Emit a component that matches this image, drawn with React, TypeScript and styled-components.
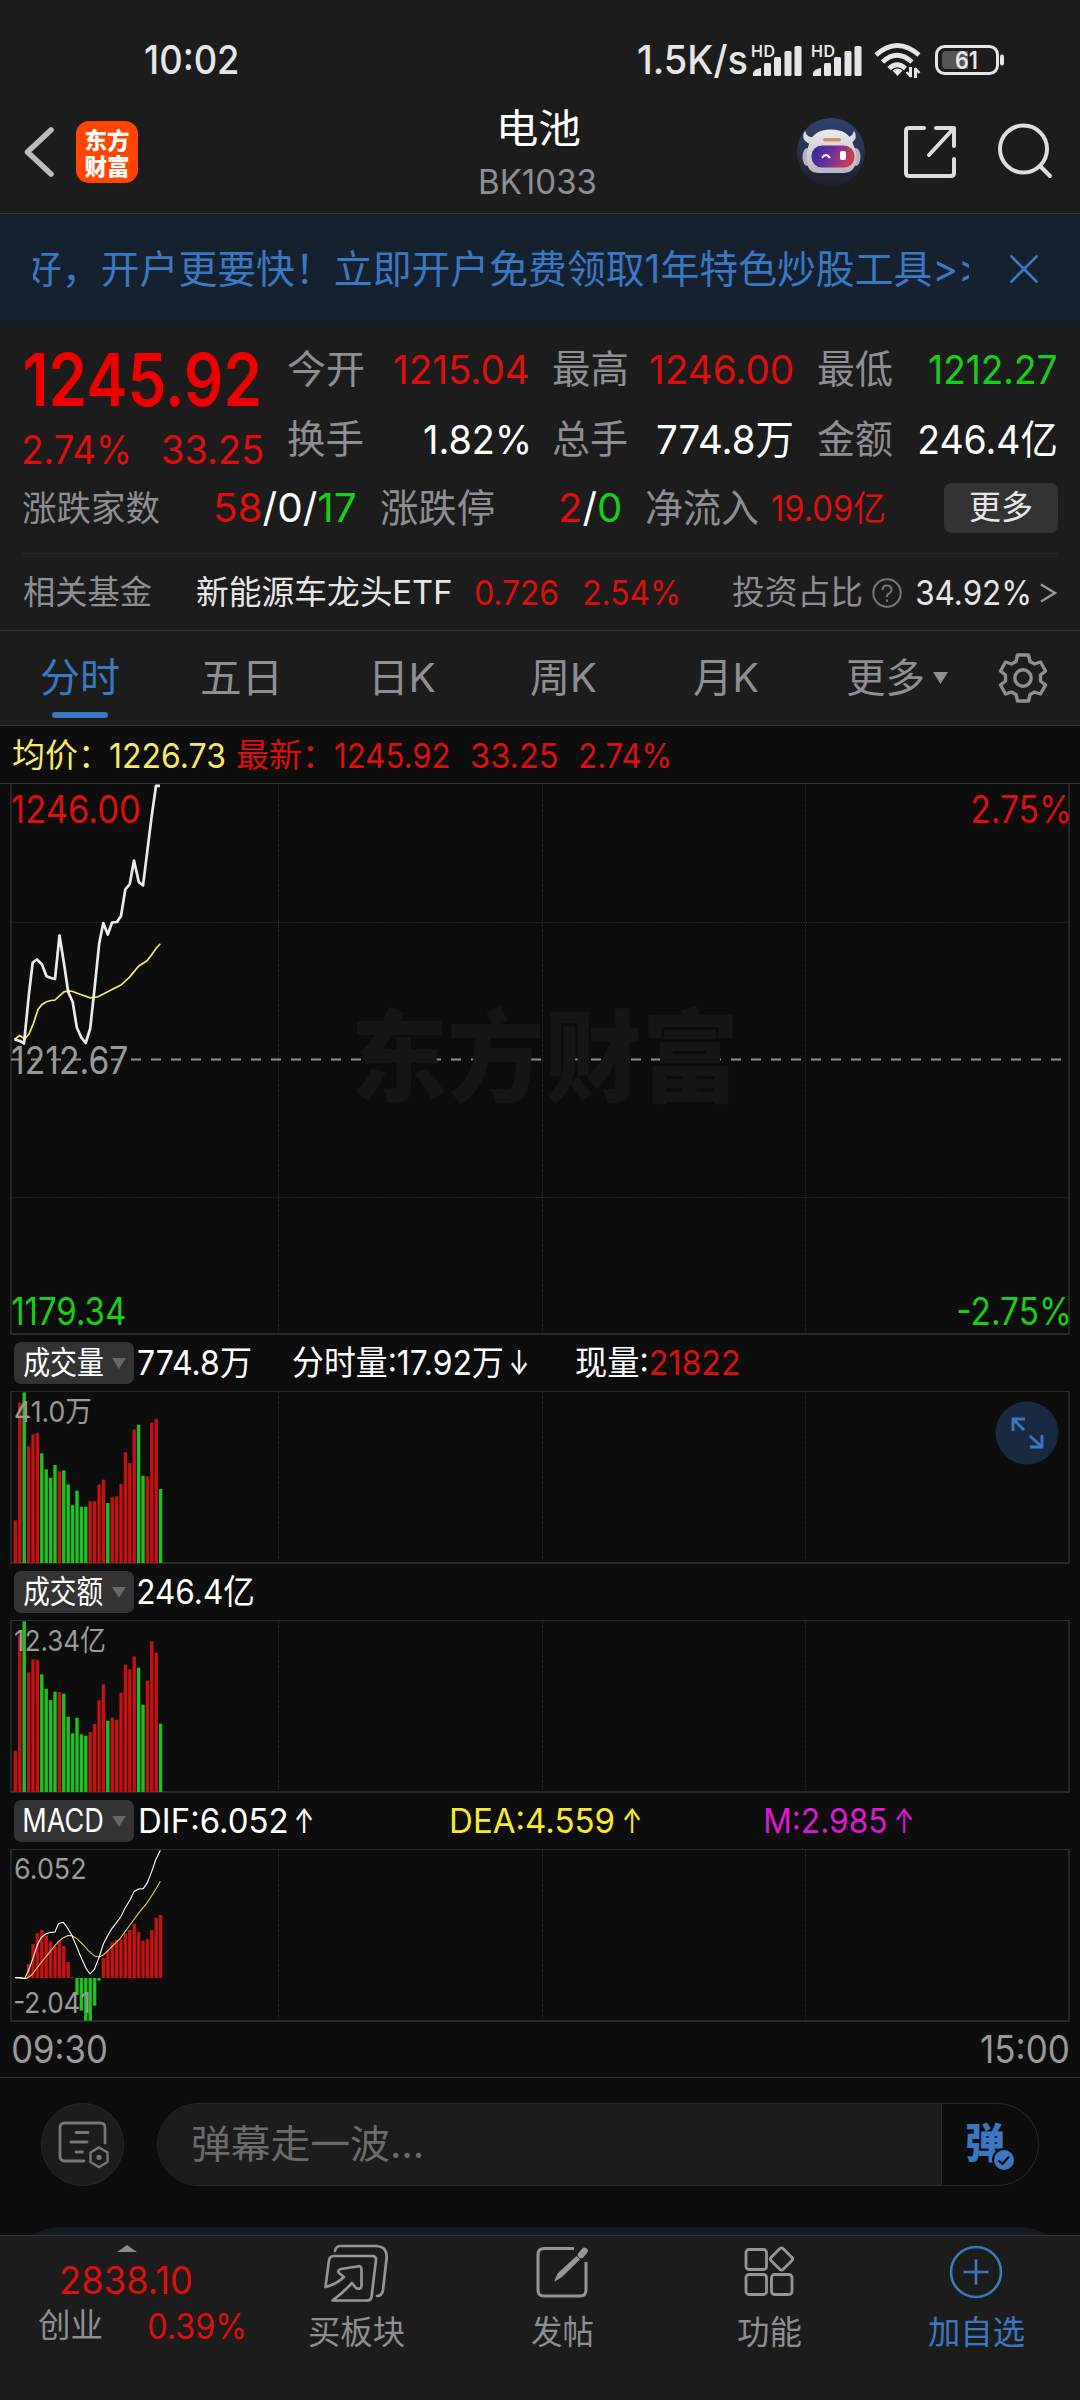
import React, { useLayoutEffect, useRef, useState } from "react";
import styled, { createGlobalStyle } from "styled-components";

const FONT = `Inter, "Noto Sans CJK SC", sans-serif`;

const c = {
  panel: "#1c1c1c",
  chart: "#0d0d0d",
  line: "#333333",
  grid: "#2a2a2a",
  red: "#dc0f0d",
  strongRed: "#ee0000",
  green: "#18cf18",
  blue: "#3a78c2",
  gray: "#8e8e93",
  axis: "#999999",
  light: "#e6e6e6",
  white: "#ffffff",
  yellow: "#f7e967",
};

const GlobalStyle = createGlobalStyle`
  * { box-sizing: border-box; }
  html, body { margin: 0; padding: 0; background: ${c.chart}; }
  body { font-family: ${FONT}; -webkit-font-smoothing: antialiased; }
  svg { display: block; flex: none; overflow: visible; }
`;

/* ---------- text that fills a fixed slot ---------- */

const Slot = styled.span<{ $w: number; $ml: number; $size: number; $color: string; $weight: number }>`
  display: block;
  flex: none;
  width: ${(p) => p.$w}px;
  margin-left: ${(p) => p.$ml}px;
  height: 1.2em;
  line-height: 1.2;
  font-size: ${(p) => p.$size}px;
  font-weight: ${(p) => p.$weight};
  color: ${(p) => p.$color};
`;

const SlotInner = styled.span`
  display: inline-block;
  white-space: pre;
  transform-origin: 0 50%;
  vertical-align: top;
`;

interface FitProps {
  w: number;
  size: number;
  color?: string;
  weight?: number;
  ml?: number;
  children: React.ReactNode;
}

function Fit({ w, size, color = c.white, weight = 400, ml = 0, children }: FitProps) {
  const ref = useRef<HTMLSpanElement>(null);
  const [transform, setTransform] = useState("none");
  useLayoutEffect(() => {
    const el = ref.current;
    const ctx = document.createElement("canvas").getContext("2d");
    if (!el || !ctx) return;
    ctx.font = `${weight} ${size}px ${FONT}`;
    const m = ctx.measureText(el.textContent || "");
    const ink = m.actualBoundingBoxLeft + m.actualBoundingBoxRight;
    if (ink > 0) setTransform(`scaleX(${w / ink}) translateX(${m.actualBoundingBoxLeft}px)`);
  }, [w, size, weight]);
  return (
    <Slot $w={w} $ml={ml} $size={size} $color={color} $weight={weight}>
      <SlotInner ref={ref} style={{ transform }}>
        {children}
      </SlotInner>
    </Slot>
  );
}

const Tint = styled.span<{ $color: string }>`
  color: ${(p) => p.$color};
`;

/* ---------- layout parts ---------- */

const Screen = styled.main`
  width: 1080px;
  height: 2400px;
  display: flex;
  flex-direction: column;
  overflow: hidden;
  background: ${c.chart};
`;

const Row = styled.div<{ $h: number; $pl?: number; $pt?: number }>`
  display: flex;
  align-items: center;
  flex: none;
  height: ${(p) => p.$h}px;
  padding-left: ${(p) => p.$pl || 0}px;
  padding-top: ${(p) => p.$pt || 0}px;
`;

const StatusBar = styled(Row)`
  background: ${c.panel};
`;

const Signal = styled.div<{ $ml: number }>`
  margin-left: ${(p) => p.$ml}px;
`;

const Header = styled.header`
  flex: none;
  display: flex;
  height: 114px;
  padding-left: 24px;
  background: ${c.panel};
  border-bottom: 1px solid ${c.line};
`;

const Back = styled.div`
  padding-top: 26px;
`;

const Logo = styled.div`
  width: 62px;
  height: 62px;
  margin: 21px 0 0 20px;
  border-radius: 13px;
  background: #ff4500;
  color: #fff;
  display: flex;
  flex-direction: column;
  align-items: center;
  justify-content: center;
  font: 900 22.5px/26px "Noto Sans CJK SC", sans-serif;
`;

const Title = styled.div`
  margin-left: 342px;
  width: 115px;
  display: flex;
  flex-direction: column;
  padding-top: 5px;
`;

const SubTitle = styled.div`
  padding-top: 9px;
`;

const Actions = styled.div`
  display: flex;
  align-items: center;
  height: 104px;
  margin-left: 202px;
`;

const IconSlot = styled.div<{ $ml: number }>`
  margin-left: ${(p) => p.$ml}px;
`;

const Banner = styled.section`
  flex: none;
  display: flex;
  align-items: center;
  height: 110px;
  padding: 0 42px 0 33px;
  background: #15212f;
`;

const Marquee = styled.div`
  width: 937px;
  height: 60px;
  overflow: hidden;
  display: flex;
  align-items: center;
  margin-right: 41px;
`;

const Quote = styled.section`
  flex: none;
  height: 307px;
  padding: 10px 22px 0;
  background: ${c.panel};
  border-bottom: 1px solid ${c.line};
`;

const QuoteTop = styled.div`
  display: grid;
  grid-template-columns: 264px 240px 239px 238px;
  height: 140px;
  padding-left: 2px;
`;

const PriceCol = styled.div``;

const StatCol = styled.div<{ $ml?: number }>`
  display: flex;
  flex-direction: column;
  width: 240px;
  margin-left: ${(p) => p.$ml || 0}px;
`;

const Stat = styled.div<{ $w: number }>`
  display: flex;
  align-items: center;
  justify-content: space-between;
  width: ${(p) => p.$w}px;
  height: 70px;
  padding-top: 1px;
`;

const MoreButton = styled.button`
  display: flex;
  align-items: center;
  justify-content: center;
  width: 114px;
  height: 50px;
  margin: 0 0 0 60px;
  padding: 0;
  border: 0;
  border-radius: 8px;
  background: #333333;
  font-family: inherit;
`;

const Divider = styled.hr`
  height: 2px;
  margin: 11px 0 0;
  border: 0;
  background: #242424;
`;

const Tabs = styled.nav`
  flex: none;
  display: flex;
  height: 95px;
  padding-left: 41px;
  background: ${c.panel};
  border-bottom: 1px solid ${c.line};
`;

const Tab = styled.div<{ $ml: number }>`
  display: flex;
  flex-direction: column;
  align-items: center;
  margin-left: ${(p) => p.$ml}px;
  padding-top: 23px;
`;

const TabMark = styled.i`
  width: 56px;
  height: 6px;
  margin-top: 10px;
  border-radius: 3px;
  background: ${c.blue};
`;

const TabMore = styled.div`
  display: flex;
  align-items: center;
  height: 94px;
  margin-left: 89px;
`;

const InfoLine = styled(Row)`
  border-bottom: 1px solid ${c.line};
`;

const Chart = styled.div<{ $h: number }>`
  position: relative;
  flex: none;
  height: ${(p) => p.$h}px;
`;

const Over = styled.div<{ $x: number; $y: number }>`
  position: absolute;
  left: ${(p) => p.$x}px;
  top: ${(p) => p.$y}px;
  height: 0;
  display: flex;
  align-items: center;
`;

const Chip = styled.div`
  flex: none;
  display: flex;
  align-items: center;
  width: 120px;
  height: 42px;
  padding-left: 10px;
  border-radius: 7px;
  background: #333333;
`;

const Danmu = styled.section`
  flex: none;
  display: flex;
  height: 158px;
  padding: 25px 0 0 41px;
  border-top: 1px solid ${c.line};
  position: relative;
`;

const RoundButton = styled.div`
  width: 83px;
  height: 83px;
  border-radius: 50%;
  border: 1px solid #282828;
  background: ${c.panel};
  display: flex;
  align-items: center;
  justify-content: center;
`;

const Pill = styled.div`
  display: flex;
  width: 882px;
  height: 83px;
  margin-left: 33px;
  border: 1px solid #2a2a2a;
  border-radius: 42px;
  overflow: hidden;
`;

const PillInput = styled.div`
  display: flex;
  align-items: center;
  width: 784px;
  padding-left: 35px;
  background: ${c.panel};
  border-right: 1px solid #2a2a2a;
`;

const PillToggle = styled.div`
  position: relative;
  flex: 1;
  display: flex;
  align-items: center;
  padding: 0 0 2px 25px;
`;

const Badge = styled.div`
  position: absolute;
  left: 50px;
  top: 44px;
`;

const CardEdge = styled.div`
  position: absolute;
  left: 26px;
  right: 26px;
  bottom: 0;
  height: 8px;
  background: #121b25;
  clip-path: path("M6 9 Q18 0 34 0 H994 Q1010 0 1022 9 Z");
`;

const Footer = styled.footer`
  flex: 1;
  display: flex;
  border-top: 1px solid ${c.line};
  background: ${c.panel};
`;

const IndexBox = styled.div`
  width: 309px;
  padding-left: 38px;
`;

const Caret = styled.div`
  padding: 9px 0 0 79px;
`;

const NavItem = styled.div<{ $ml: number; $w: number }>`
  margin-left: ${(p) => p.$ml}px;
  width: ${(p) => p.$w}px;
  display: flex;
  flex-direction: column;
  align-items: center;
`;

const NavIcon = styled.div`
  height: 77px;
  padding-top: 4px;
`;

/* ---------- icons ---------- */

const Bars = () => (
  <svg width="52" height="34" viewBox="0 0 52 34" fill={c.light}>
    <text x="0" y="14" fontFamily="Inter" fontSize="16" fontWeight="600" textLength="24">HD</text>
    <path d="M2 33v-3q1-4 8-5v8z" />
    <rect x="13" y="20" width="7" height="13" rx="1.500" />
    <rect x="23" y="14" width="7" height="19" rx="1.500" />
    <rect x="33.500" y="8" width="7" height="25" rx="1.500" />
    <rect x="43.500" y="3" width="7" height="30" rx="1.500" />
  </svg>
);

const Wifi = () => (
  <svg width="48" height="36" viewBox="0 0 48 36" fill="none" stroke={c.light} strokeWidth="4.600">
    <path d="M2 13Q23 -6 45 13" />
    <path d="M8.500 20Q23 6.500 38 20" />
    <path d="M15 26.500Q23 19 31.500 26.500" />
    <path d="M18.500 28.500Q23.500 24.500 28.500 28.500L23.500 34z" fill={c.light} stroke="none" />
    <path d="M36.500 25v10M41.500 36v-10" stroke={c.light} strokeWidth="3" />
    <path d="M37 35l-4.500-5M41 26l4.500 5" strokeWidth="2.500" />
  </svg>
);

const Battery = () => (
  <svg width="70" height="32" viewBox="0 0 70 32">
    <rect x="1.500" y="2.500" width="61" height="27" rx="8" fill="none" stroke={c.light} strokeWidth="3" />
    <path d="M11 7h22v18H11q-4 0-4-4V11q0-4 4-4z" fill="#555" />
    <rect x="65" y="10.500" width="4" height="11" rx="2" fill={c.light} />
    <text x="20" y="24.500" fontFamily="Inter" fontSize="24" fontWeight="600" fill={c.light} textLength="23" lengthAdjust="spacingAndGlyphs">61</text>
  </svg>
);

const Robot = () => (
  <svg width="68" height="68" viewBox="0 0 68 68">
    <defs>
      <linearGradient id="sky" x1="0" y1="0" x2="0" y2="1">
        <stop offset="0" stopColor="#30436d" />
        <stop offset="1" stopColor="#1c1f2b" />
      </linearGradient>
      <linearGradient id="visor" x1="0" y1="0" x2="1" y2="0.200">
        <stop offset="0" stopColor="#2b2a9a" />
        <stop offset="0.500" stopColor="#6d2fa0" />
        <stop offset="1" stopColor="#c8404f" />
      </linearGradient>
      <linearGradient id="shell" x1="0" y1="0" x2="0" y2="1">
        <stop offset="0" stopColor="#eceaee" />
        <stop offset="1" stopColor="#b9b6bf" />
      </linearGradient>
    </defs>
    <circle cx="34" cy="34" r="34" fill="url(#sky)" />
    <path d="M8 12.500q-5 8 3.500 13l5-6q-7 0-8.500-7zM57 12.500q5 8-3.500 13l-5-6q7 0 8.500-7z" fill="#dddbe0" />
    <ellipse cx="10" cy="39" rx="4.500" ry="9" fill="#b7b4be" />
    <ellipse cx="59" cy="39" rx="4.500" ry="9" fill="#b7b4be" />
    <path d="M12 26Q16 11.500 34 11.500T56 26q4 8 3 18-2 11-12 11H22Q11 55 10 44q-1-10 2-18z" fill="url(#shell)" />
    <rect x="26" y="20" width="18" height="3.500" rx="1.700" fill="#c9936a" />
    <rect x="14.500" y="27.500" width="43" height="22" rx="10.500" fill="url(#visor)" />
    <path d="M25 40q4-6 8 0" fill="none" stroke="#fff" strokeWidth="2" />
    <rect x="43" y="33" width="6" height="9" rx="2" fill="#fff" />
  </svg>
);

const Gear = () => (
  <svg width="48" height="50" viewBox="-24 -25 48 50" fill="none" stroke={c.gray} strokeWidth="3.400" strokeLinejoin="round">
    <path d="M-5.500 -23H5.500L7 -16.500L11.500 -14L17.500 -16L22.500 -7L17.500 -3V3L22.500 7L17.500 16L11.500 14L7 16.500L5.500 23H-5.500L-7 16.500L-11.500 14L-17.500 16L-22.500 7L-17.500 3V-3L-22.500 -7L-17.500 -16L-11.500 -14L-7 -16.500Z" />
    <circle r="8.200" />
  </svg>
);

const Down = ({ w, h, color }: { w: number; h: number; color: string }) => (
  <svg width={w} height={h} viewBox="0 0 10 10" preserveAspectRatio="none">
    <path d="M0 0H10L5 10Z" fill={color} />
  </svg>
);

/* ---------- chart data ---------- */

const LEFT = 11;
const RIGHT = 1069;
const GRID_X = [278.5, 542.5, 805.5];
const STEP = 4.4;
const FIRST = 13.7;

const price: [number, number][] = [
  [14.5, 255.5], [20, 257], [24, 259.500], [29, 209.500], [32.700, 178.500], [37, 175.500], [42, 180.500], [46.500, 192.300],
  [51, 194], [55, 195], [59.500, 151.500], [64, 179.500], [68.200, 208], [72.700, 218], [76.800, 243.500], [81.300, 253.500],
  [85.700, 259], [90.200, 244.500], [94.700, 203], [99.200, 159.500], [103.300, 139], [107.800, 150.500], [112, 138.500],
  [117, 138], [121, 132], [125.300, 105.500], [129.800, 100], [134, 76.500], [138.800, 98], [143, 101.500], [147, 69.500],
  [151.500, 33.500], [156, 1.800], [160, 1.800],
];

const average: [number, number][] = [
  [14.500, 255.500], [19.600, 251.500], [24.800, 254.800], [29, 250], [33.400, 239.500], [38, 225.500], [42, 220.500], [46.500, 217.800],
  [51, 216.500], [55, 216], [59.500, 211.800], [64, 207.800], [68.200, 206.800], [72.700, 207.500], [81.300, 210.800], [90.200, 213.800],
  [98, 212.800], [103.300, 210], [112, 205.500], [121, 201], [129.800, 192.800], [138.800, 182], [147, 176.800], [151.500, 171], [156, 164.500], [160.300, 159.800],
];

type Bar = [number, "r" | "g"];
const kinds = "rrgrrrggggrgggggg" + "rrrrgrrrrrrggrrrg";
const toBars = (values: number[]): Bar[] => values.map((v, i) => [v / 3, kinds[i] as "r" | "g"]);

const volume = toBars([
  128, 481, 512, 350, 386, 390, 329, 281, 256, 294, 275, 278, 236, 174, 217, 169, 169, 185, 185, 235, 250, 180, 198, 200, 237, 332,
  300, 400, 415, 262, 260, 421, 433, 222,
]);
const amount = toBars([
  124, 470, 512, 359, 398, 397, 353, 310, 276, 301, 300, 295, 226, 176, 223, 173, 169, 180, 204, 275, 323, 214, 223, 217, 298, 382,
  368, 407, 373, 262, 334, 452, 418, 205,
]);
const macd = [
  0, 0, 0, 42, 102, 135, 144, 127, 110, 94, 113, 96, 48, 3, -51, -98, -128, -128, -83, -8, 60, 82, 107, 114, 116, 134, 144, 162, 139,
  112, 117, 144, 181, 189,
].map((v) => v / 3);

const dif: [number, number][] = [
  [46, 593], [60, 593], [74, 596], [86, 570], [99, 535], [112, 495], [124, 472], [137, 462], [152, 457], [165, 456], [175, 432], [182, 428], [190, 427],
  [200, 440], [215, 465], [230, 500], [243, 532], [258, 565], [270, 582], [283, 568], [296, 535], [310, 492], [323, 467], [336, 445],
  [350, 427], [362, 411], [375, 385], [390, 360], [402, 335], [415, 327], [430, 326], [442, 308], [455, 275], [467, 240], [481, 211],
];
const dea: [number, number][] = [
  [46, 593], [80, 595], [95, 585], [120, 552], [150, 515], [175, 485], [190, 473], [203, 467], [215, 467], [230, 475], [250, 495],
  [265, 512], [285, 529], [298, 531], [310, 525], [330, 506], [360, 476], [390, 435], [415, 400], [440, 370], [460, 340], [481, 304],
];
const scaled = (pts: [number, number][]) => pts.map(([x, y]) => `${x / 3},${(y - 207) / 3}`).join(" ");
const plain = (pts: [number, number][]) => pts.map((p) => p.join(",")).join(" ");

function Frame({ h, top = true }: { h: number; top?: boolean }) {
  return (
    <g fill="none">
      {GRID_X.map((x) => (
        <path key={x} d={`M${x} 1V${h - 2}`} stroke="#333" strokeDasharray="1 1.500" />
      ))}
      {top && <path d={`M${LEFT - 1} 0.500H${RIGHT + 1}`} stroke={c.grid} />}
      <path d={`M${LEFT} 0V${h - 1}H${RIGHT}V0`} stroke={c.grid} strokeWidth="1.800" />
    </g>
  );
}

function BarPane({ bars, children }: { bars: Bar[]; children: React.ReactNode }) {
  return (
    <Chart $h={173}>
      <svg width="1080" height="173">
        <Frame h={173} />
        {bars.map(([v, k], i) => (
          <rect key={i} x={FIRST + i * STEP} y={172 - v} width="3.400" height={v} fill={k === "r" ? "#c41111" : "#1fc01f"} />
        ))}
      </svg>
      {children}
    </Chart>
  );
}

function Selector({ label }: { label: string }) {
  return (
    <Chip>
      <Fit w={79} size={32}>{label}</Fit>
      <IconSlot $ml={9}>
        <Down w={14} h={11} color="#666" />
      </IconSlot>
    </Chip>
  );
}

export default function App() {
  return (
    <>
      <GlobalStyle />
      <Screen>
        <StatusBar $h={100} $pl={145} $pt={20}>
          <Fit w={93} size={40} weight={500} color={c.light}>10:02</Fit>
          <Fit w={109} size={39} weight={500} color={c.light} ml={400}>1.5K/s</Fit>
          <Signal $ml={4}><Bars /></Signal>
          <Signal $ml={8}><Bars /></Signal>
          <Signal $ml={11}><Wifi /></Signal>
          <Signal $ml={13}><Battery /></Signal>
        </StatusBar>

        <Header>
          <Back>
            <svg width="32" height="52" viewBox="0 0 32 52" fill="none" stroke="#bdbdbd" strokeWidth="5.500" strokeLinecap="round" strokeLinejoin="round">
              <path d="M27 4L3.500 26L27 48" />
            </svg>
          </Back>
          <Logo>
            <span>东方</span>
            <span>财富</span>
          </Logo>
          <Title>
            <Fit w={79} size={40} ml={21}>电池</Fit>
            <SubTitle>
              <Fit w={115} size={34} color={c.gray}>BK1033</Fit>
            </SubTitle>
          </Title>
          <Actions>
            <Robot />
            <IconSlot $ml={38}>
              <svg width="54" height="54" viewBox="0 0 54 54" fill="none" stroke="#dedede" strokeWidth="4" strokeLinecap="round" strokeLinejoin="round">
                <path d="M21 3H6Q3 3 3 6V48Q3 51 6 51H48Q51 51 51 48V34M33 3H51V21M51 3L26 30" />
              </svg>
            </IconSlot>
            <IconSlot $ml={40}>
              <svg width="56" height="56" viewBox="0 0 56 56" fill="none" stroke="#dedede" strokeWidth="4" strokeLinecap="round">
                <circle cx="26.500" cy="25" r="23.500" />
                <path d="M43 42L53 52" />
              </svg>
            </IconSlot>
          </Actions>
        </Header>

        <Banner>
          <Marquee>
            <Fit w={957} size={39} color={c.blue} ml={-9}>好，开户更要快！立即开户免费领取1年特色炒股工具&gt;&gt;</Fit>
          </Marquee>
          <svg width="28" height="28" viewBox="0 0 28 28" fill="none" stroke={c.blue} strokeWidth="2.800" strokeLinecap="round">
            <path d="M1.500 1.500L26.500 26.500M26.500 1.500L1.500 26.500" />
          </svg>
        </Banner>

        <Quote>
          <QuoteTop>
            <PriceCol>
              <Row $h={92}>
                <Fit w={234} size={73} weight={600} color={c.strongRed} ml={1}>1245.92</Fit>
              </Row>
              <Row $h={48}>
                <Fit w={104} size={40} color={c.red}>2.74%</Fit>
                <Fit w={99} size={40} color={c.red} ml={35}>33.25</Fit>
              </Row>
            </PriceCol>
            <StatCol>
              <Stat $w={240}>
                <Fit w={75} size={39} color={c.gray}>今开</Fit>
                <Fit w={134} size={40} color={c.red}>1215.04</Fit>
              </Stat>
              <Stat $w={240}>
                <Fit w={75} size={39} color={c.gray}>换手</Fit>
                <Fit w={104} size={40}>1.82%</Fit>
              </Stat>
            </StatCol>
            <StatCol $ml={25}>
              <Stat $w={239}>
                <Fit w={74} size={39} color={c.gray}>最高</Fit>
                <Fit w={142} size={40} color={c.red}>1246.00</Fit>
              </Stat>
              <Stat $w={239}>
                <Fit w={74} size={39} color={c.gray}>总手</Fit>
                <Fit w={135} size={40}>774.8万</Fit>
              </Stat>
            </StatCol>
            <StatCol $ml={51}>
              <Stat $w={238}>
                <Fit w={74} size={39} color={c.gray}>最低</Fit>
                <Fit w={127} size={40} color={c.green}>1212.27</Fit>
              </Stat>
              <Stat $w={238}>
                <Fit w={74} size={39} color={c.gray}>金额</Fit>
                <Fit w={136} size={40}>246.4亿</Fit>
              </Stat>
            </StatCol>
          </QuoteTop>
          <Row $h={68} $pl={1}>
            <Fit w={137} size={35} color={c.gray}>涨跌家数</Fit>
            <Fit w={139} size={40} ml={56}>
              <Tint $color={c.red}>58</Tint>/0/<Tint $color={c.green}>17</Tint>
            </Fit>
            <Fit w={113} size={39} color={c.gray} ml={26}>涨跌停</Fit>
            <Fit w={59} size={40} ml={67}>
              <Tint $color={c.red}>2</Tint>/<Tint $color={c.green}>0</Tint>
            </Fit>
            <Fit w={112} size={39} color={c.gray} ml={26}>净流入</Fit>
            <Fit w={112} size={35} color={c.red} ml={14}>19.09亿</Fit>
            <MoreButton>
              <Fit w={62} size={33} color={c.light}>更多</Fit>
            </MoreButton>
          </Row>
          <Divider />
          <Row $h={74} $pl={1} $pt={2}>
            <Fit w={129} size={33} color={c.gray}>相关基金</Fit>
            <Fit w={254} size={33} color={c.light} ml={45}>新能源车龙头ETF</Fit>
            <Fit w={82} size={34} color={c.red} ml={25}>0.726</Fit>
            <Fit w={94} size={34} color={c.red} ml={26}>2.54%</Fit>
            <Fit w={129} size={33} color={c.gray} ml={55}>投资占比</Fit>
            <IconSlot $ml={10}>
              <svg width="30" height="30" viewBox="0 0 30 30" fill="none" stroke="#777" strokeWidth="2">
                <circle cx="15" cy="15" r="13.700" />
                <path d="M10.500 12Q10.500 7.500 15 7.500T19.500 12Q19.500 14 17 15.500T15 19M15 21.500V24" />
              </svg>
            </IconSlot>
            <Fit w={112} size={34} color={c.light} ml={15}>34.92%</Fit>
            <IconSlot $ml={11}>
              <svg width="17" height="20" viewBox="0 0 17 20" fill="none" stroke="#999" strokeWidth="2.400">
                <path d="M1 1.500L15 10L1 18.500" />
              </svg>
            </IconSlot>
          </Row>
        </Quote>

        <Tabs>
          <Tab $ml={0}>
            <Fit w={78} size={40} color={c.blue}>分时</Fit>
            <TabMark />
          </Tab>
          <Tab $ml={83}><Fit w={75} size={40} color={c.gray}>五日</Fit></Tab>
          <Tab $ml={98}><Fit w={60} size={40} color={c.gray}>日K</Fit></Tab>
          <Tab $ml={96}><Fit w={65} size={40} color={c.gray}>周K</Fit></Tab>
          <Tab $ml={98}><Fit w={64} size={40} color={c.gray}>月K</Fit></Tab>
          <TabMore>
            <Fit w={76} size={40} color={c.gray}>更多</Fit>
            <IconSlot $ml={10}><Down w={15} h={12} color={c.gray} /></IconSlot>
            <IconSlot $ml={51}><Gear /></IconSlot>
          </TabMore>
        </Tabs>

        <InfoLine $h={58} $pl={13} $pt={3}>
          <Fit w={76} size={33} color={c.yellow}>均价：</Fit>
          <Fit w={114} size={34} color={c.yellow} ml={21}>1226.73</Fit>
          <Fit w={76} size={33} color={c.red} ml={13}>最新：</Fit>
          <Fit w={114} size={34} color={c.red} ml={22}>1245.92</Fit>
          <Fit w={85} size={34} color={c.red} ml={23}>33.25</Fit>
          <Fit w={89} size={34} color={c.red} ml={23}>2.74%</Fit>
        </InfoLine>

        <Chart $h={551}>
          <Over $x={355} $y={274}>
            <Fit w={378} size={100} weight={900} color="#161616">东方财富</Fit>
          </Over>
          <Over $x={12} $y={277}><Fit w={115} size={38} color={c.axis}>1212.67</Fit></Over>
          <svg width="1080" height="551">
            <Frame h={551} top={false} />
            <path d={`M${LEFT} 138.500H${RIGHT}M${LEFT} 413.500H${RIGHT}`} stroke="#333" strokeDasharray="1 1.500" />
            <path d={`M${LEFT} 275.500H${RIGHT}`} stroke="#8f8f8f" strokeWidth="2" strokeDasharray="10 10" />
            <polyline points={plain(average)} fill="none" stroke={c.yellow} strokeWidth="1.700" />
            <polyline points={plain(price)} fill="none" stroke="#ebebeb" strokeWidth="2.700" strokeLinejoin="round" />
          </svg>
          <Over $x={12} $y={26}><Fit w={127} size={38} color={c.red}>1246.00</Fit></Over>
          <Over $x={972} $y={26}><Fit w={97} size={38} color={c.red}>2.75%</Fit></Over>
          <Over $x={12} $y={528}><Fit w={113} size={38} color={c.green}>1179.34</Fit></Over>
          <Over $x={958} $y={528}><Fit w={111} size={38} color={c.green}>-2.75%</Fit></Over>
        </Chart>

        <Row $h={56} $pl={14}>
          <Selector label="成交量" />
          <Fit w={112} size={34} ml={4}>774.8万</Fit>
          <Fit w={209} size={34} ml={43}>分时量:17.92万</Fit>
          <Fit w={16} size={34} ml={9}>↓</Fit>
          <Fit w={163} size={34} ml={49}>
            现量:<Tint $color={c.red}>21822</Tint>
          </Fit>
        </Row>
        <BarPane bars={volume}>
          <Over $x={15} $y={21}><Fit w={76} size={29} color={c.axis}>41.0万</Fit></Over>
          <Over $x={994.5} $y={42}>
            <svg width="64" height="64" viewBox="0 0 64 64" fill="none" stroke={c.blue} strokeWidth="2.800">
              <circle cx="32" cy="32" r="31.500" fill="#172a40" stroke="none" />
              <path d="M18 30V18H30M18 18L29 29M47 34V46H35M47 46L35 35" />
            </svg>
          </Over>
        </BarPane>

        <Row $h={56} $pl={14}>
          <Selector label="成交额" />
          <Fit w={115} size={34} ml={4}>246.4亿</Fit>
        </Row>
        <BarPane bars={amount}>
          <Over $x={15} $y={21}><Fit w={90} size={29} color={c.axis}>12.34亿</Fit></Over>
        </BarPane>

        <Row $h={56} $pl={14}>
          <Selector label="MACD" />
          <Fit w={147} size={34} ml={6}>DIF:6.052</Fit>
          <Fit w={16} size={34} ml={9}>↑</Fit>
          <Fit w={163} size={34} color="#f7ea2a" ml={139}>DEA:4.559</Fit>
          <Fit w={16} size={34} color="#f7ea2a" ml={10}>↑</Fit>
          <Fit w={121} size={34} color="#dd18d2" ml={125}>M:2.985</Fit>
          <Fit w={16} size={34} color="#dd18d2" ml={10}>↑</Fit>
        </Row>
        <Chart $h={173}>
          <svg width="1080" height="173">
            <Frame h={173} />
            {macd.map((v, i) => (
              <rect
                key={i}
                x={FIRST + i * STEP}
                y={v > 0 ? 129 - v : 129}
                width="3.400"
                height={Math.abs(v)}
                fill={v > 0 ? "#c41111" : "#1fc01f"}
              />
            ))}
            <polyline points={scaled(dea)} fill="none" stroke="#e0d052" strokeWidth="1.100" />
            <polyline points={scaled(dif)} fill="none" stroke="#ffffff" strokeWidth="1.100" />
          </svg>
          <Over $x={15} $y={20}><Fit w={70} size={29} color={c.axis}>6.052</Fit></Over>
          <Over $x={15} $y={154}><Fit w={74} size={29} color={c.axis}>-2.041</Fit></Over>
        </Chart>
        <Row $h={55} $pl={13} $pt={1}>
          <Fit w={93} size={38} color={c.axis}>09:30</Fit>
          <Fit w={87} size={38} color={c.axis} ml={875}>15:00</Fit>
        </Row>

        <Danmu>
          <RoundButton>
            <svg width="54" height="52" viewBox="0 0 54 52" fill="none" stroke="#777" strokeWidth="2.800" strokeLinecap="round">
              <path d="M49 24V9Q49 4 44 4H9Q4 4 4 9V37Q4 42 9 42H28" />
              <path d="M20 13.500H32M15 23H31M20 33H26.500" />
              <path d="M43 28.500L51.500 33.500V43L43 48L34.500 43V33.500Z" strokeWidth="2.400" />
              <circle cx="43" cy="38.300" r="2.600" fill="#777" stroke="none" />
            </svg>
          </RoundButton>
          <Pill>
            <PillInput>
              <Fit w={229} size={39} color="#6b6b6b">弹幕走一波...</Fit>
            </PillInput>
            <PillToggle>
              <Fit w={37} size={41} weight={900} color={c.blue}>弹</Fit>
              <Badge>
                <svg width="24" height="24" viewBox="0 0 24 24">
                  <circle cx="12" cy="12" r="12" fill="#0d0d0d" />
                  <circle cx="12" cy="12" r="10" fill={c.blue} />
                  <path d="M6.500 12.500L10.500 16L17 8.500" fill="none" stroke="#0d0d0d" strokeWidth="2.200" />
                </svg>
              </Badge>
            </PillToggle>
          </Pill>
          <CardEdge />
        </Danmu>

        <Footer>
          <IndexBox>
            <Caret>
              <svg width="20" height="7" viewBox="0 0 20 7"><path d="M0 7L10 0L20 7Z" fill="#8a8a8a" /></svg>
            </Caret>
            <Row $h={56} $pl={23} $pt={2}>
              <Fit w={130} size={38} color={c.red}>2838.10</Fit>
            </Row>
            <Row $h={34} $pt={1}>
              <Fit w={64} size={33} color={c.gray}>创业</Fit>
              <Fit w={95} size={35} color={c.red} ml={47}>0.39%</Fit>
            </Row>
          </IndexBox>
          <NavItem $ml={0} $w={95}>
            <NavIcon>
              <svg width="66" height="66" viewBox="1 0 66 66" fill="none" stroke="#95959a" strokeWidth="2.700" strokeLinejoin="round" strokeLinecap="round">
                <path d="M12 11Q13 6 17 6H52Q65 6 63.500 19L60 50Q59 56 54 56" />
                <path d="M2.500 47L6 20Q7 16 11 16H49Q53.500 16 53 20L48.500 57Q48 60.500 44 60.500H9.500Q21 52 29 43L33 48Q38 50 38.500 46V29Q38 25 34 26.500L18 29Q14 30 16 33L21 37Q14 44 2.500 47Z" />
              </svg>
            </NavIcon>
            <Fit w={95} size={33} color={c.gray}>买板块</Fit>
          </NavItem>
          <NavItem $ml={127} $w={62}>
            <NavIcon>
              <svg width="54" height="66" viewBox="0 0 54 66" fill="none" stroke="#95959a" strokeWidth="3" strokeLinecap="butt">
                <path d="M39 8.500H9Q3 8.500 3 14.500V50Q3 56 9 56H45Q51 56 51 50V22" />
                <path d="M41.500 16L45 19.500L27 37L19 42L22.500 33.500Z" fill="#95959a" stroke="none" />
                <path d="M46 15L49.500 11" strokeWidth="6.500" strokeLinecap="round" />
              </svg>
            </NavIcon>
            <Fit w={62} size={33} color={c.gray}>发帖</Fit>
          </NavItem>
          <NavItem $ml={144} $w={64}>
            <NavIcon>
              <svg width="52" height="66" viewBox="0 0 52 66" fill="none" stroke="#95959a" strokeWidth="2.800" strokeLinejoin="round">
                <rect x="3" y="9.500" width="20.500" height="20" rx="3" />
                <rect x="3" y="34.500" width="20.500" height="20" rx="3" />
                <rect x="28.500" y="34.500" width="20.500" height="20" rx="3" />
                <rect x="30" y="10.500" width="17" height="17" rx="2.500" transform="rotate(45 38.500 19)" />
              </svg>
            </NavIcon>
            <Fit w={63} size={33} color={c.gray}>功能</Fit>
          </NavItem>
          <NavItem $ml={127} $w={96}>
            <NavIcon>
              <svg width="54" height="66" viewBox="0 0 54 66" fill="none" stroke={c.blue} strokeWidth="2.600">
                <circle cx="27" cy="32" r="25" />
                <path d="M27 19.500V44.500M14.500 32H39.500" />
              </svg>
            </NavIcon>
            <Fit w={96} size={33} color={c.blue}>加自选</Fit>
          </NavItem>
        </Footer>
      </Screen>
    </>
  );
}
